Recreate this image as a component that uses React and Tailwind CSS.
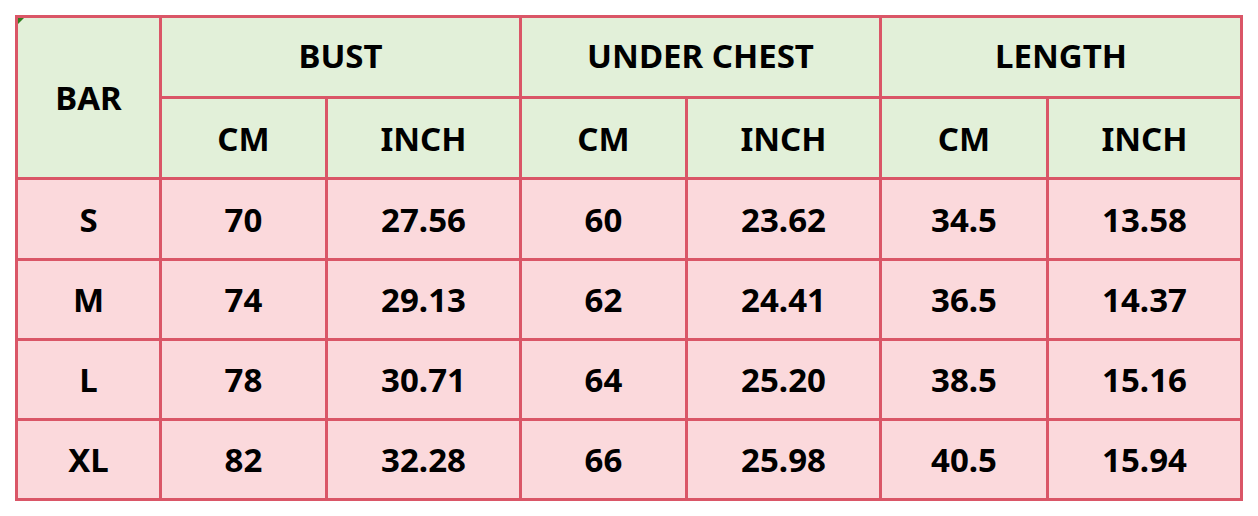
import React from 'react'

const rows = [
  ['S', '70', '27.56', '60', '23.62', '34.5', '13.58'],
  ['M', '74', '29.13', '62', '24.41', '36.5', '14.37'],
  ['L', '78', '30.71', '64', '25.20', '38.5', '15.16'],
  ['XL', '82', '32.28', '66', '25.98', '40.5', '15.94'],
]

export default function App() {
  const head = 'bg-[#e2f0d9] flex items-center justify-center'
  const cell = 'bg-[#fbd9dc] flex items-center justify-center'
  return (
    <div className="w-[1258px] h-[516px] bg-white pt-[15px] pl-[15px]" style={{ fontFamily: '"Noto Sans", "Open Sans", sans-serif' }}>
      <div className="inline-grid bg-[#da5667] p-[3px] gap-[3px] grid-cols-[141px_163px_191px_163px_191px_164px_191px] grid-rows-[78px_78px_78px_77px_77px_77px] text-[33px] font-bold text-black leading-none">
        <div className={head + ' row-span-2 relative'}>
          <div className="absolute top-0 left-0 w-0 h-0 border-t-[6px] border-r-[6px] border-t-[#2f7d1f] border-r-transparent"></div>
          BAR
        </div>
        <div className={head + ' col-span-2 pb-[3px]'}>BUST</div>
        <div className={head + ' col-span-2 pb-[3px]'}>UNDER CHEST</div>
        <div className={head + ' col-span-2 pb-[3px]'}>LENGTH</div>
        {['CM', 'INCH', 'CM', 'INCH', 'CM', 'INCH'].map((t, i) => (
          <div key={i} className={head}>{t}</div>
        ))}
        {rows.map((r, i) =>
          r.map((v, j) => (
            <div key={i + '-' + j} className={cell}>{v}</div>
          ))
        )}
      </div>
    </div>
  )
}
